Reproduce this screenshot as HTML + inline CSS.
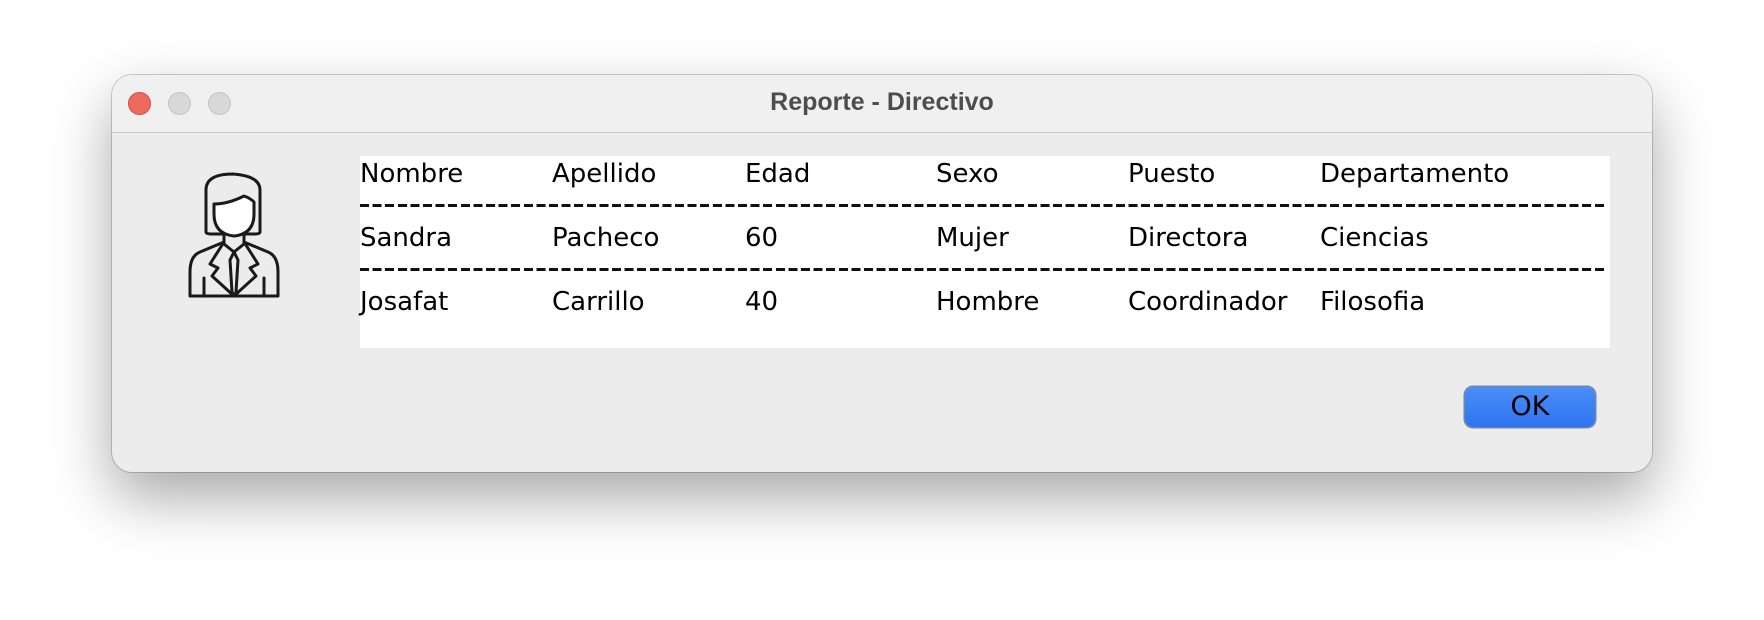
<!DOCTYPE html>
<html><head><style>
body{margin:0;width:1764px;height:620px;background:#fff;overflow:hidden;font-family:"DejaVu Sans","Liberation Sans",sans-serif;}
.win{position:absolute;left:112px;top:75px;width:1540px;height:397px;border-radius:20px;background:#ececec;box-shadow:0 25px 60px rgba(0,0,0,0.35),0 0 0 1px rgba(0,0,0,0.18);overflow:hidden;}
.tb{position:absolute;left:0;top:0;width:100%;height:57px;background:#f0f0f0;border-bottom:1px solid #c9c9c9;}
.dot{position:absolute;top:17px;width:23px;height:23px;border-radius:50%;background:#d8d8d8;box-shadow:inset 0 0 0 1px #c4c4c4;}
.title{position:absolute;left:0;width:100%;top:13px;text-align:center;font-weight:bold;font-size:25px;color:#4d4d4d;font-family:"Liberation Sans",sans-serif;}
.panel{position:absolute;left:248px;top:81px;width:1250px;height:192px;background:#fff;}
.t{position:absolute;font-size:26px;color:#000;white-space:nowrap;}
.dash{position:absolute;left:0;width:1246px;height:3px;background:repeating-linear-gradient(90deg,#111 0 9px,transparent 9px 12.6px);}
.ok{position:absolute;left:1353px;top:312px;width:130px;height:40px;border-radius:8px;background:linear-gradient(#4a8ef8,#2f74f0);box-shadow:0 0 0 1.5px #6f88a8;font-size:27px;text-align:center;line-height:40px;color:#000;}
</style></head><body>
<div class="win">
<div class="tb">
<div class="dot" style="left:16px;background:#ec6a5e;box-shadow:inset 0 0 0 1px #d5544a"></div>
<div class="dot" style="left:56px"></div>
<div class="dot" style="left:96px"></div>
<div class="title">Reporte - Directivo</div>
</div>
<svg style="position:absolute;left:76px;top:97px" width="92" height="128" viewBox="0 0 92 128" fill="none" stroke="#1a1a1a" stroke-width="3" stroke-linejoin="round" stroke-linecap="round">
<path d="M18 60 V18 Q18 2 45 2 Q72 4 72 18 V60 Q72 62 66 62 H24 Q18 62 18 60Z"/>
<path d="M26 32 Q40 32 56 24 Q62 26 66 30 V42 Q66 62 46 64 Q26 62 26 42Z" fill="#fff"/>
<path d="M36 62 V72 L46 80 L56 72 V62"/>
<path d="M36 70 L12 80 Q2 84 2 100 V124 H90 V100 Q90 84 80 80 L56 70"/>
<path d="M36 70 L22 92 L30 96 L24 104 L46 124 L68 104 L62 96 L70 92 L56 70"/>
<path d="M46 80 L42 88 L44 120 L46 124 L48 120 L50 88 Z"/>
<path d="M16 106 V124 M76 106 V124"/>
</svg>
<div class="panel">
<div class="t" style="left:0;top:3px">Nombre</div><div class="t" style="left:192px;top:3px">Apellido</div><div class="t" style="left:385px;top:3px">Edad</div><div class="t" style="left:576px;top:3px">Sexo</div><div class="t" style="left:768px;top:3px">Puesto</div><div class="t" style="left:960px;top:3px">Departamento</div>
<div class="dash" style="top:48px"></div>
<div class="t" style="left:0;top:67px">Sandra</div><div class="t" style="left:192px;top:67px">Pacheco</div><div class="t" style="left:385px;top:67px">60</div><div class="t" style="left:576px;top:67px">Mujer</div><div class="t" style="left:768px;top:67px">Directora</div><div class="t" style="left:960px;top:67px">Ciencias</div>
<div class="dash" style="top:112px"></div>
<div class="t" style="left:0;top:131px">Josafat</div><div class="t" style="left:192px;top:131px">Carrillo</div><div class="t" style="left:385px;top:131px">40</div><div class="t" style="left:576px;top:131px">Hombre</div><div class="t" style="left:768px;top:131px">Coordinador</div><div class="t" style="left:960px;top:131px">Filosofia</div>
</div>
<div class="ok">OK</div>
</div>
</body></html>
